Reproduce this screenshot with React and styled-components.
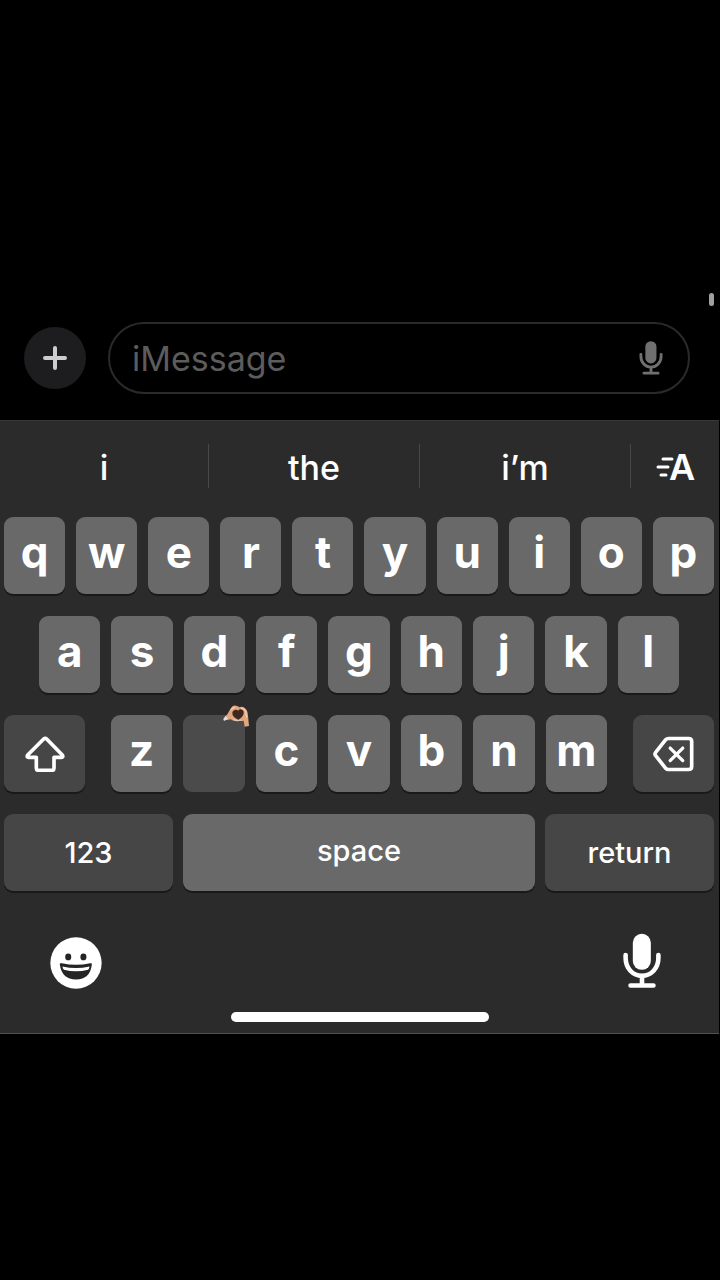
import React from 'react';
import styled, { createGlobalStyle, ThemeProvider } from 'styled-components';

const theme = {
  colors: {
    black: '#000',
    keyboard: '#2b2b2b',
    key: '#696969',
    keyDark: '#464646',
    keyPressed: '#4b4b4b',
    shadow: '#191919',
    divider: '#484848',
    edge: '#505050',
    outline: '#2a2a2b',
    round: '#1d1d1f',
    muted: '#5c5c5c',
    mic: '#707070',
    white: '#fff',
  },
  font: 'Inter, "Liberation Sans", sans-serif',
};

const suggestions = ['i', 'the', 'i’m'];
const topRow = 'qwertyuiop'.split('');
const middleRow = 'asdfghjkl'.split('');
const bottomRow = 'zxcvbnm'.split('');

const MicIcon = ({ width, height }) => (
  <svg width={width} height={height} viewBox="0 0 116 168" aria-hidden="true">
    <rect x="30" y="1" width="55" height="110" rx="27" fill="currentColor" />
    <g fill="none" stroke="currentColor" strokeWidth="14" strokeLinecap="round">
      <path d="M8 66v9c0 31 22 54 50 54s50-23 50-54v-9" />
      <path d="M58 130v28M23 159h70" />
    </g>
  </svg>
);

const PlusIcon = () => (
  <svg width="26" height="26" viewBox="0 0 26 26" aria-hidden="true">
    <path d="M13 3v20M3 13h20" stroke="#cdcdcd" strokeWidth="4" strokeLinecap="round" />
  </svg>
);

const ShiftIcon = () => (
  <svg width="40" height="36" viewBox="0 0 120 108" aria-hidden="true">
    <path
      d="M56 9 8 57q-4 7 3 7h23v33q0 6 6 6h41q6 0 6-6V64h22q7 0 3-7L65 9q-4-4-9 0z"
      fill="none"
      stroke="currentColor"
      strokeWidth="11"
      strokeLinejoin="round"
    />
  </svg>
);

const BackspaceIcon = () => (
  <svg width="41" height="36" viewBox="0 0 124 108" aria-hidden="true">
    <g fill="none" stroke="currentColor" strokeWidth="11" strokeLinecap="round" strokeLinejoin="round">
      <path d="M46 7h62q9 0 9 9v76q0 9-9 9H46q-4 0-7-3L8 59q-4-5 0-10L39 10q3-3 7-3z" />
      <path d="m52 36 38 38M90 36 52 74" strokeWidth="10" />
    </g>
  </svg>
);

const FormatIcon = () => (
  <svg width="42" height="44" viewBox="0 0 42 44" aria-hidden="true">
    <path d="M9 15h9M4 23h10M7 31h5" stroke="currentColor" strokeWidth="3" strokeLinecap="round" />
    <FormatLetter x="28" y="36" textAnchor="middle">A</FormatLetter>
  </svg>
);

const SmileIcon = () => (
  <svg width="52" height="52" viewBox="0 0 154 154" aria-hidden="true">
    <circle cx="77" cy="77" r="76" fill="#fff" />
    <g fill="#242424">
      <ellipse cx="54" cy="59" rx="9" ry="10" />
      <ellipse cx="99" cy="59" rx="9" ry="10" />
      <path d="M29 81q-1-5 6-3 42 9 84 0 6-2 5 3-5 45-47 45T29 81z" />
    </g>
    <path d="M37 87q40 9 80 0 0 6-4 10-36 9-72 0-4-4-4-10z" fill="#fff" />
  </svg>
);

const HeartHands = () => (
  <Hands width="27" height="24" viewBox="0 0 81 72" aria-hidden="true">
    <path d="M1 46 14 29 22 15Q29 3 39 5q7 1 10 5 9-4 17 3 8 6 9 22l3 31-13 2-3-18q-9 3-17-1-11 5-22-3l-12 2z" fill="#e2a67f" />
    <path d="m1 45 7-10 7 10-12 6z" fill="#e6ddd5" />
    <path d="M24 18q6-9 13-8M54 13q10 0 14 9l3 18" fill="none" stroke="#f7cdac" strokeWidth="4" />
    <path d="M46 20c-6-6-18-2-18 7 0 11 10 16 18 20 9-5 17-12 16-23-1-9-13-11-16-4z" fill="#3d2721" />
    <path d="M32 46q9 7 22 2" fill="none" stroke="#dfc9bb" strokeWidth="4" />
  </Hands>
);

const LetterKeys = ({ letters }) => (
  <Letters $count={letters.length}>
    {letters.map((letter) => (letter === 'x' ? (
      <PressedKey key={letter} type="button" aria-label="x">
        <HeartHands />
      </PressedKey>
    ) : (
      <LetterKey key={letter} type="button">{letter}</LetterKey>
    )))}
  </Letters>
);

const App = () => (
  <ThemeProvider theme={theme}>
    <GlobalStyle />
    <Page>
      <Thread>
        <ScrollThumb />
      </Thread>
      <Composer>
        <RoundButton type="button" aria-label="Add">
          <PlusIcon />
        </RoundButton>
        <Field>
          <MessageInput type="text" placeholder="iMessage" aria-label="iMessage" />
          <DictateButton type="button" aria-label="Record audio">
            <MicIcon width={24} height={34} />
          </DictateButton>
        </Field>
      </Composer>
      <Keyboard>
        <Suggestions>
          {suggestions.map((word) => (
            <Suggestion key={word} type="button">{word}</Suggestion>
          ))}
          <FormatButton type="button" aria-label="Text format">
            <FormatIcon />
          </FormatButton>
        </Suggestions>
        <Keys>
          <LetterKeys letters={topRow} />
          <Inset>
            <LetterKeys letters={middleRow} />
          </Inset>
          <Row $columns="81fr 496fr 81fr" $gap="26px">
            <DarkKey type="button" aria-label="Shift"><ShiftIcon /></DarkKey>
            <LetterKeys letters={bottomRow} />
            <DarkKey type="button" aria-label="Delete"><BackspaceIcon /></DarkKey>
          </Row>
          <Row $columns="169fr 352fr 169fr" $gap="10px">
            <DarkKey type="button">123</DarkKey>
            <SpaceKey type="button">space</SpaceKey>
            <DarkKey type="button">return</DarkKey>
          </Row>
        </Keys>
        <Footer>
          <FooterButton type="button" aria-label="Emoji"><SmileIcon /></FooterButton>
          <FooterButton type="button" aria-label="Dictate">
            <MicIcon width={38} height={56} />
          </FooterButton>
        </Footer>
        <HomeIndicator />
      </Keyboard>
      <Rest />
    </Page>
  </ThemeProvider>
);

const GlobalStyle = createGlobalStyle`
  *, *::before, *::after {
    box-sizing: border-box;
  }
  body {
    background: #000;
    margin: 0;
  }
  button, input {
    background: none;
    border: 0;
    color: inherit;
    font: inherit;
    margin: 0;
    padding: 0;
  }
  button {
    cursor: pointer;
  }
  svg {
    display: block;
  }
`;

const Page = styled.main`
  background: ${({ theme }) => theme.colors.black};
  color: ${({ theme }) => theme.colors.white};
  display: flex;
  flex-direction: column;
  font-family: ${({ theme }) => theme.font};
  min-height: 100vh;
`;
const Thread = styled.section`
  align-items: flex-end;
  display: flex;
  flex: 306 1 0;
  flex-direction: column;
  justify-content: flex-end;
  padding: 0 6px 16px;
`;
const Rest = styled.div`
  flex: 246 1 0;
`;
const ScrollThumb = styled.div`
  background: #a0a0a0;
  border-radius: 3px;
  height: 13px;
  width: 5px;
`;

const Composer = styled.div`
  align-items: center;
  display: flex;
  gap: 22px;
  padding: 0 30px 26px 24px;
`;
const RoundButton = styled.button`
  align-items: center;
  background: ${({ theme }) => theme.colors.round};
  border-radius: 50%;
  display: flex;
  flex: none;
  height: 62px;
  justify-content: center;
  width: 62px;
`;
const Field = styled.div`
  align-items: center;
  border: 2px solid ${({ theme }) => theme.colors.outline};
  border-radius: 36px;
  display: flex;
  flex: 1;
  height: 72px;
  min-width: 0;
  padding: 0 25px 0 22px;
`;
const MessageInput = styled.input`
  flex: 1;
  font-size: 34px;
  height: 48px;
  min-width: 0;
  outline: none;

  &::placeholder {
    color: ${({ theme }) => theme.colors.muted};
    opacity: 1;
  }
`;
const DictateButton = styled.button`
  color: ${({ theme }) => theme.colors.mic};
`;

const Keyboard = styled.section`
  background: ${({ theme }) => theme.colors.keyboard};
  border-bottom: 1px solid ${({ theme }) => theme.colors.edge};
  border-top: 1px solid #383838;
  margin-right: 1px;
  padding-bottom: 11px;
`;
const Suggestions = styled.div`
  display: grid;
  grid-template-columns: 209fr 211fr 211fr 88fr;
  padding: 23px 0 29px;
`;
const Suggestion = styled.button`
  align-items: center;
  border-right: 1px solid ${({ theme }) => theme.colors.divider};
  display: flex;
  font-size: 34px;
  font-weight: 500;
  height: 44px;
  justify-content: center;
  line-height: 40px;
  padding-top: 4px;
`;
const FormatButton = styled(Suggestion)`
  border-right: 0;
  padding-top: 0;
`;
const FormatLetter = styled.text`
  fill: currentColor;
  font-size: 36px;
  font-weight: 600;
`;

const Keys = styled.div`
  display: flex;
  flex-direction: column;
  gap: 22px;
  padding: 0 5px 0 4px;
`;
const Row = styled.div`
  display: grid;
  gap: ${({ $gap }) => $gap};
  grid-template-columns: ${({ $columns }) => $columns};
`;
const Inset = styled.div`
  padding: 0 35px;
`;
const Letters = styled.div`
  display: grid;
  gap: 11px;
  grid-template-columns: repeat(${({ $count }) => $count}, 1fr);
`;
const Key = styled.button`
  align-items: center;
  background: ${({ theme }) => theme.colors.key};
  border-radius: 9px;
  box-shadow: 0 2px 0 ${({ theme }) => theme.colors.shadow};
  display: flex;
  height: 77px;
  justify-content: center;
  min-width: 0;
`;
const LetterKey = styled(Key)`
  font-size: 44px;
  font-weight: 700;
  padding-bottom: 7px;
`;
const PressedKey = styled(Key)`
  background: ${({ theme }) => theme.colors.keyPressed};
  box-shadow: none;
  position: relative;
`;
const DarkKey = styled(Key)`
  background: ${({ theme }) => theme.colors.keyDark};
  font-size: 29px;
  font-weight: 500;
`;
const SpaceKey = styled(Key)`
  font-size: 29px;
  font-weight: 500;
  padding-bottom: 4px;
`;
const Hands = styled.svg`
  position: absolute;
  right: -5px;
  top: -11px;
`;

const Footer = styled.div`
  align-items: flex-end;
  display: flex;
  justify-content: space-between;
  padding: 42px 58px 0 50px;
`;
const FooterButton = styled.button`
  color: ${({ theme }) => theme.colors.white};
`;
const HomeIndicator = styled.div`
  background: ${({ theme }) => theme.colors.white};
  border-radius: 5px;
  height: 10px;
  margin: 23px auto 0;
  width: 258px;
`;

export default App;
